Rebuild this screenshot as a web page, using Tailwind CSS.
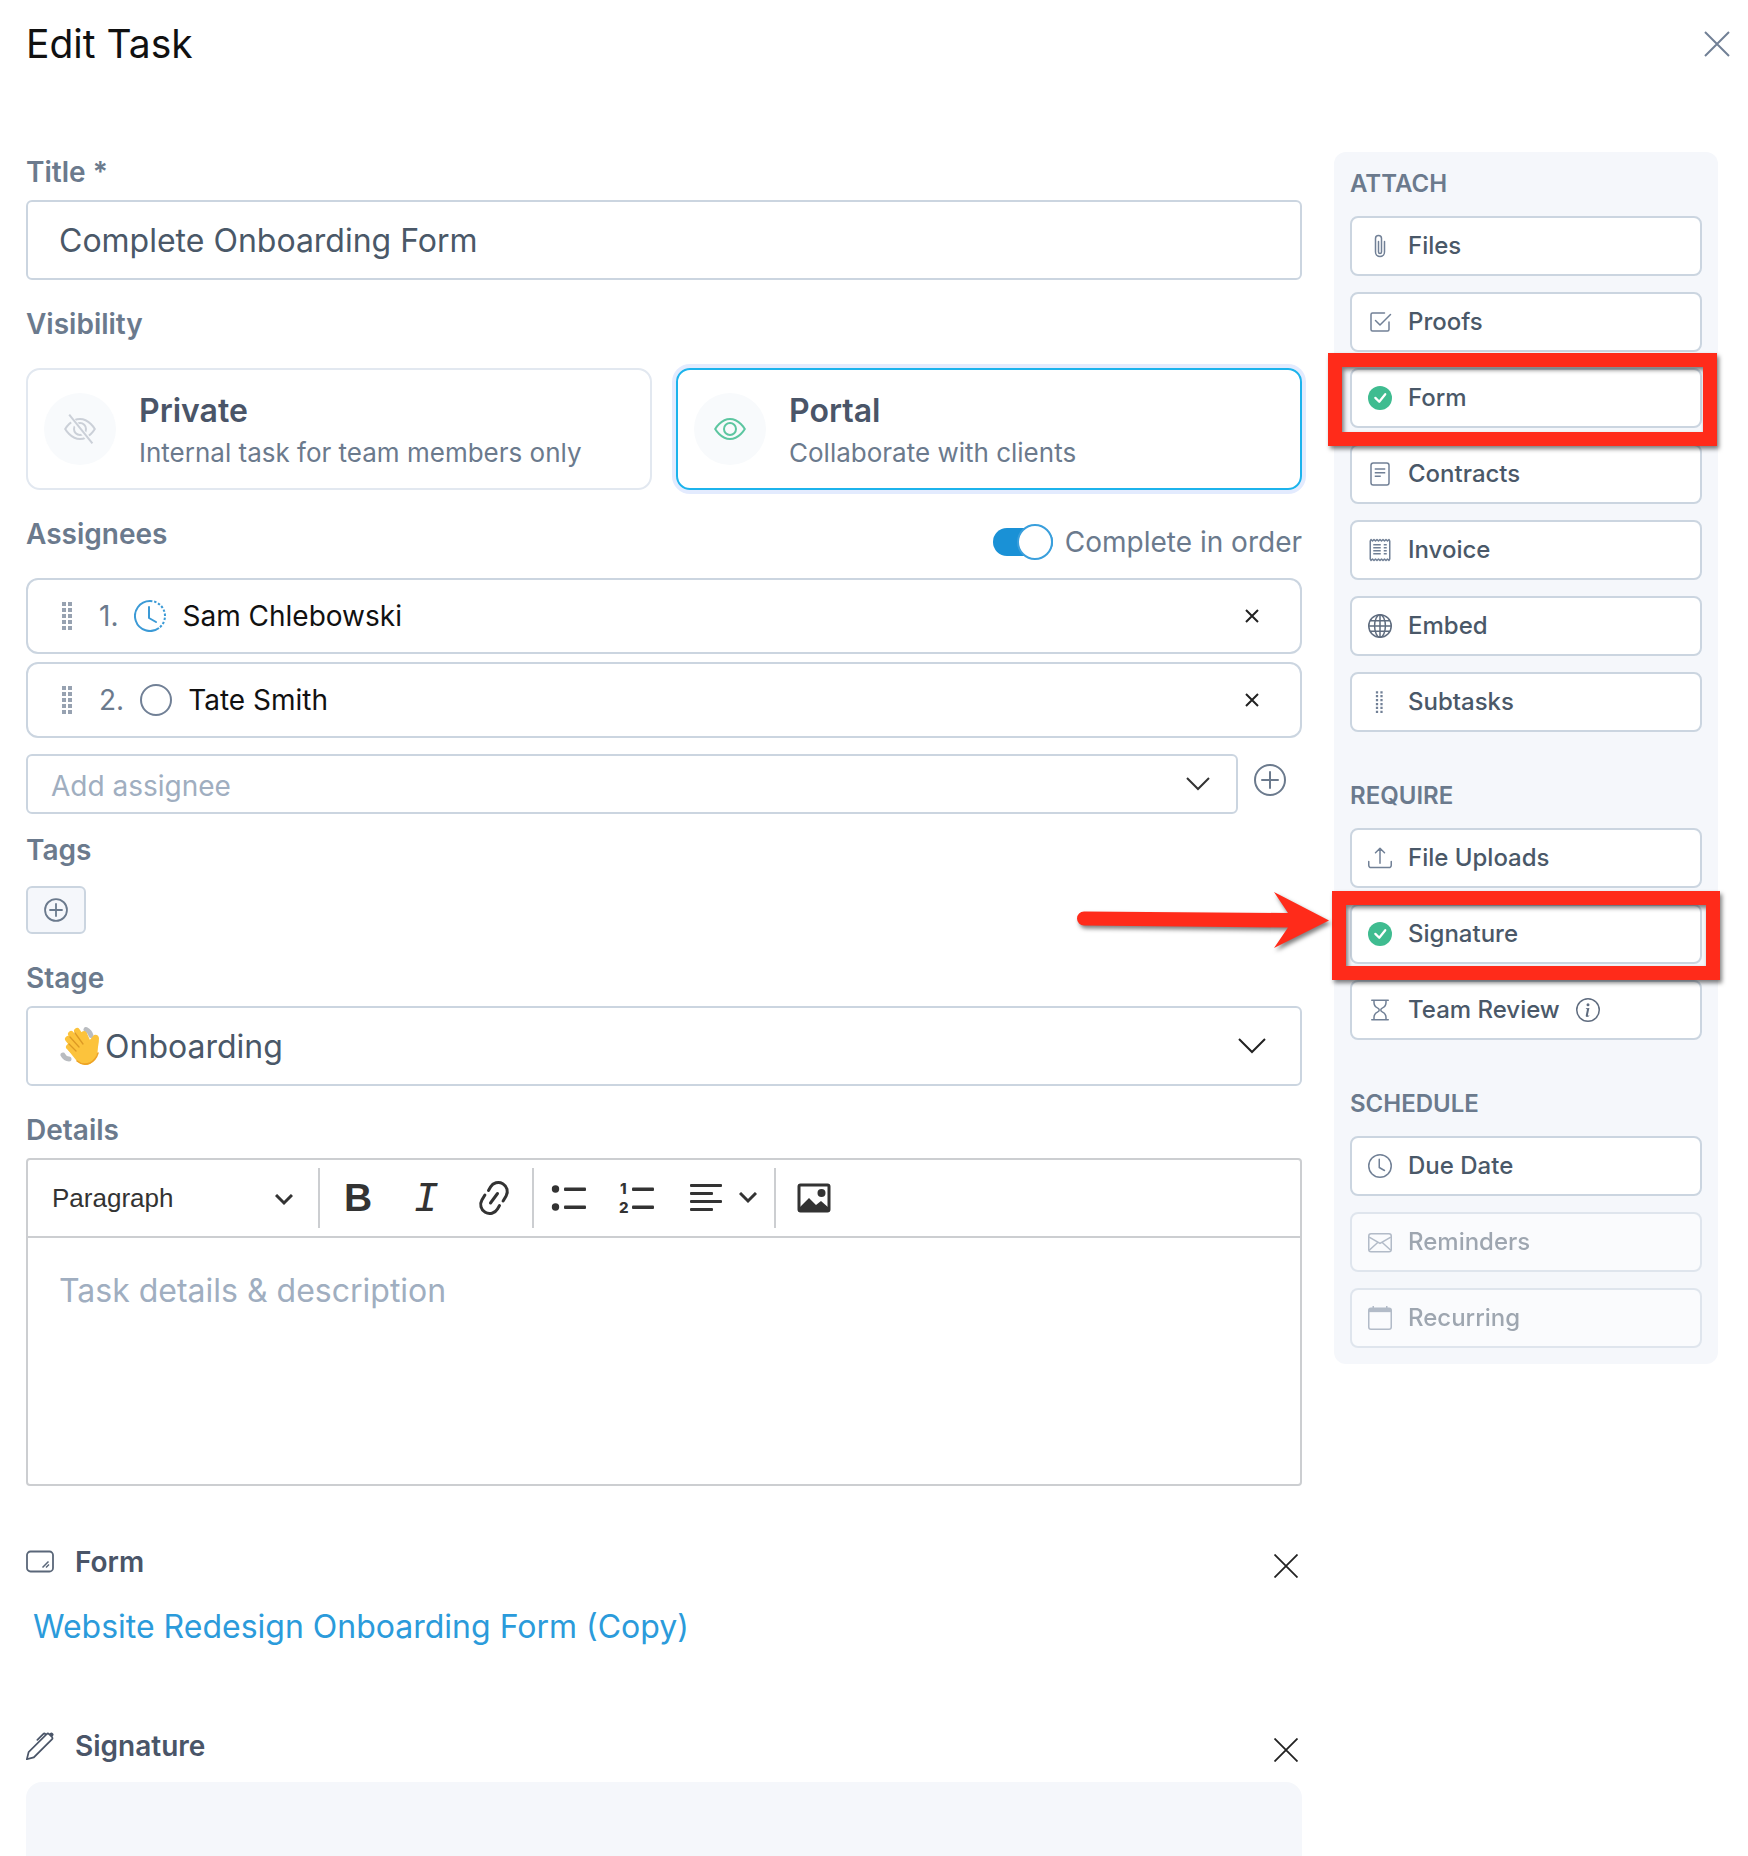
<!DOCTYPE html>
<html lang="en">
<head>
  <meta charset="UTF-8">
  <meta name="viewport" content="width=device-width, initial-scale=1.0">
  <title>Edit Task</title>
  <script src="https://cdn.jsdelivr.net/npm/@tailwindcss/browser@4"></script>
</head>
<body class="bg-white font-['Inter',sans-serif] text-[28px] leading-10 text-[#6b7a8d] flex flex-col min-h-screen">
  <!-- Header -->
  <header class="flex items-center justify-between pt-5 pb-[84px] pl-[26px] pr-[18px]">
    <h1 class="text-[39px] leading-12 text-[#111]">Edit Task</h1>
    <button type="button" aria-label="Close" class="text-[#718096]">
      <svg class="size-[26px]" viewBox="0 0 26 26" fill="none" stroke="currentColor" stroke-width="2"><path d="M1 1l24 24M25 1L1 25"/></svg>
    </button>
  </header>

  <div class="flex-1 grid grid-cols-[minmax(0,1fr)_384px] gap-8 pl-[26px] pr-[30px]">
    <!-- Task form -->
    <main class="flex flex-col">
      <label for="title" class="font-semibold">Title *</label>
      <input id="title" type="text" value="Complete Onboarding Form" class="mt-2 h-20 w-full rounded-md border-2 border-[#cbd5e0] px-[31px] text-[32px] text-[#4a5868]">

      <fieldset class="mt-6">
        <legend class="font-semibold">Visibility</legend>
        <div class="mt-6 grid grid-cols-2 gap-6">
          <label class="flex h-[122px] items-center rounded-[14px] border-2 border-[#e2e8f0] pl-4 has-checked:border-[#1cb3ec] has-checked:ring-4 has-checked:ring-[#e3ebfe]">
            <input type="radio" name="visibility" class="sr-only">
            <span class="flex size-18 items-center justify-center rounded-full bg-[#f8fafc] text-[#cbd0d8]">
              <svg class="size-8" viewBox="0 0 16 16" fill="none" stroke="currentColor"><path d="M.6 8S3.400 3 8 3s7.400 5 7.400 5-2.800 5-7.400 5S.6 8 .6 8z"/><circle cx="8" cy="8" r="3"/><path d="M2.200 1.200l12 14" stroke="#f8fafc" stroke-width="2.400"/><path d="M2.600.8l11.600 14.400"/></svg>
            </span>
            <span class="ml-[23px] flex flex-col pt-1">
              <span class="text-[32px] leading-11 font-semibold text-[#4a5568]">Private</span>
              <span class="text-[26px]">Internal task for team members only</span>
            </span>
          </label>
          <label class="flex h-[122px] items-center rounded-[14px] border-2 border-[#e2e8f0] pl-4 has-checked:border-[#1cb3ec] has-checked:ring-4 has-checked:ring-[#e3ebfe]">
            <input type="radio" name="visibility" class="sr-only" checked>
            <span class="flex size-18 items-center justify-center rounded-full bg-[#f8fafc] text-[#5cc6a0]">
              <svg class="size-8" viewBox="0 0 16 16" fill="none" stroke="currentColor"><path d="M.6 8S3.400 3 8 3s7.400 5 7.400 5-2.800 5-7.400 5S.6 8 .6 8z"/><circle cx="8" cy="8" r="3"/></svg>
            </span>
            <span class="ml-[23px] flex flex-col pt-1">
              <span class="text-[32px] leading-11 font-semibold text-[#4a5568]">Portal</span>
              <span class="text-[26px]">Collaborate with clients</span>
            </span>
          </label>
        </div>
      </fieldset>

      <!-- Assignees -->
      <div class="mt-6 flex h-16 items-start justify-between">
        <h2 class="font-semibold">Assignees</h2>
        <label class="flex h-14 items-center gap-3">
          <input type="checkbox" role="switch" class="peer sr-only" checked>
          <span class="flex h-7 w-15 items-center rounded-full bg-[#cbd5e0] peer-checked:justify-end peer-checked:bg-[#1a91d6]">
            <span class="size-9 shrink-0 rounded-full border-2 border-[#3a9fdc] bg-white"></span>
          </span>
          Complete in order
        </label>
      </div>
      <ol class="flex flex-col gap-2">
        <li class="flex h-19 items-center rounded-xl border-2 border-[#cbd5e0] pl-[33px] pr-10">
          <svg class="h-7 w-3 mr-[26px]" viewBox="0 0 12 28" fill="#97a2b1"><path d="M1 0h4v4H1zM7 0h4v4H7zM1 6h4v4H1zM7 6h4v4H7zM1 12h4v4H1zM7 12h4v4H7zM1 18h4v4H1zM7 18h4v4H7zM1 24h4v4H1zM7 24h4v4H7z"/></svg>
          1.
          <svg class="mx-4 size-8" viewBox="0 0 16 16" fill="none" stroke="#3b9ad6"><path d="M8 .5a7.500 7.500 0 1 0 4.500 13.500"/><path d="M8 .5a7.500 7.500 0 0 1 4.500 13.500" stroke-dasharray="1.200 .9"/><path d="M7.500 3.500V9l3.500 2" stroke-linecap="round" stroke-linejoin="round"/></svg>
          <span class="flex-1 text-[#111]">Sam Chlebowski</span>
          <button type="button" aria-label="Remove Sam Chlebowski">
            <svg class="size-4" viewBox="0 0 16 16" stroke="#222" stroke-width="2"><path d="M2 2l12 12M14 2L2 14"/></svg>
          </button>
        </li>
        <li class="flex h-19 items-center rounded-xl border-2 border-[#cbd5e0] pl-[33px] pr-10">
          <svg class="h-7 w-3 mr-[26px]" viewBox="0 0 12 28" fill="#97a2b1"><path d="M1 0h4v4H1zM7 0h4v4H7zM1 6h4v4H1zM7 6h4v4H7zM1 12h4v4H1zM7 12h4v4H7zM1 18h4v4H1zM7 18h4v4H7zM1 24h4v4H1zM7 24h4v4H7z"/></svg>
          2.
          <svg class="mx-4 size-8" viewBox="0 0 16 16" fill="none" stroke="#718096"><circle cx="8" cy="8" r="7.500"/></svg>
          <span class="flex-1 text-[#111]">Tate Smith</span>
          <button type="button" aria-label="Remove Tate Smith">
            <svg class="size-4" viewBox="0 0 16 16" stroke="#222" stroke-width="2"><path d="M2 2l12 12M14 2L2 14"/></svg>
          </button>
        </li>
      </ol>
      <div class="mt-4 flex items-start gap-4">
        <div class="relative flex-1">
          <select aria-label="Add assignee" class="h-15 w-full appearance-none rounded-md border-2 border-[#cbd5e0] px-[23px] pt-1 text-[#a0aec0]">
            <option>Add assignee</option>
          </select>
          <svg class="pointer-events-none absolute right-7 top-[23px] h-3.5 w-6" viewBox="0 0 24 14" fill="none" stroke="#333" stroke-width="2"><path d="M1 1l11 11L23 1"/></svg>
        </div>
        <button type="button" aria-label="Add" class="mr-4 flex h-13 items-center">
          <svg class="size-8" viewBox="0 0 16 16" fill="none" stroke="currentColor"><circle cx="8" cy="8" r="7.500"/><path d="M8 4v8M4 8h8" stroke-linecap="round"/></svg>
        </button>
      </div>

      <h2 class="mt-4 font-semibold">Tags</h2>
      <button type="button" aria-label="Add tag" class="mt-4 flex h-12 w-15 items-center justify-center rounded-md border-2 border-[#cbd5e0] bg-[#f5f7fb]">
        <svg class="size-6" viewBox="0 0 16 16" fill="none" stroke="currentColor" stroke-width="1.200"><circle cx="8" cy="8" r="7.300"/><path d="M8 4v8M4 8h8" stroke-linecap="round"/></svg>
      </button>

      <label for="stage" class="mt-6 font-semibold">Stage</label>
      <div class="relative mt-2">
        <select id="stage" class="h-20 w-full appearance-none rounded-md border-2 border-[#cbd5e0] pt-0.5 pl-[77px] text-[32px] text-[#4a5868]">
          <option>Onboarding</option>
        </select>
        <!-- Waving hand -->
        <svg class="pointer-events-none absolute left-[34px] top-5 size-10" viewBox="0 0 40 40" fill="none" stroke-linecap="round">
          <g stroke="#b9bcc0" stroke-width="5"><path d="M26 3.500q4 2 5 6M3 29q2 4 6 4"/></g>
          <path d="M16 20l12-4 6-7q4-1 5 3 0 4-1 9 0 12-8 17-8 3-14-4L8 24z" fill="#fcc33c"/>
          <g stroke="#fcc33c" stroke-width="6"><path d="M17 24L8 13M21 20L11 8M25 17L17 5M17 28l-8-7M28 17l-4-9"/></g>
          <g stroke="#dd9a24" stroke-width="1.300"><path d="M19 21L10 11M23 18L15 7M16 25l-7-7"/></g>
          <path d="M17 35q6 5 13 2 6-3 8-10" stroke="#eda326" stroke-width="1.500"/>
        </svg>
        <svg class="pointer-events-none absolute right-[36px] top-8 h-4 w-7" viewBox="0 0 28 16" fill="none" stroke="#222" stroke-width="2"><path d="M1 1l13 13L27 1"/></svg>
      </div>

      <!-- Details editor -->
      <label for="details" class="mt-6 font-semibold">Details</label>
      <div class="mt-2 flex h-[328px] flex-col rounded-sm border-2 border-[#ccced1] text-[#333]">
        <div class="flex h-[78px] items-center border-b-2 border-[#ccced1]">
          <div class="relative w-[290px]">
            <select aria-label="Heading" class="h-15 w-full appearance-none pl-6 font-['Liberation_Sans',sans-serif] text-[26px]">
              <option>Paragraph</option>
            </select>
            <svg class="pointer-events-none absolute right-[25px] top-[26px] h-3 w-[18px]" viewBox="0 0 18 12" fill="none" stroke="#333" stroke-width="3"><path d="M1 1l8 8 8-8"/></svg>
          </div>
          <span class="h-15 w-0.5 bg-[#ccced1]"></span>
          <div class="flex gap-2 px-2">
            <button type="button" aria-label="Bold" class="size-15 font-['Liberation_Sans',sans-serif] text-[39px] font-bold">B</button>
            <button type="button" aria-label="Italic" class="size-15 pt-1 font-['Liberation_Mono',monospace] text-[42px] italic">I</button>
            <button type="button" aria-label="Link" class="flex size-15 items-center justify-center">
              <svg class="size-9" viewBox="0 0 36 36" fill="none" stroke="currentColor" stroke-width="3" stroke-linecap="round"><path d="M12.500 10.500l2-3.500a9 9 0 0 1 15.600 9l-3 5M23.500 25.500l-2 3.500a9 9 0 0 1-15.600-9l3-5M21.500 13.500l-7 9.500"/></svg>
            </button>
          </div>
          <span class="h-15 w-0.5 bg-[#ccced1]"></span>
          <div class="flex gap-2 px-[5px]">
            <button type="button" aria-label="Bulleted list" class="flex size-15 items-center justify-center">
              <svg class="size-9" viewBox="0 0 36 36" fill="currentColor"><circle cx="4.500" cy="9" r="3.700"/><circle cx="4.500" cy="27" r="3.700"/><rect x="13" y="7.500" width="22" height="3.500" rx="1"/><rect x="13" y="25.500" width="22" height="3.500" rx="1"/></svg>
            </button>
            <button type="button" aria-label="Numbered list" class="flex size-15 items-center justify-center">
              <svg class="size-9 overflow-visible" viewBox="0 0 36 36" fill="currentColor"><text x="1" y="14" class="font-['Inter',sans-serif] text-[15px] font-extrabold">1</text><text x="0" y="33" class="font-['Inter',sans-serif] text-[15px] font-extrabold">2</text><rect x="13" y="7.500" width="22" height="3.500" rx="1"/><rect x="13" y="25.500" width="22" height="3.500" rx="1"/></svg>
            </button>
            <button type="button" aria-label="Text alignment" class="flex h-15 w-[94px] items-center justify-center gap-[15px]">
              <svg class="size-9" viewBox="0 0 36 36" fill="currentColor"><rect x="2" y="4" width="32" height="3" rx="1"/><rect x="2" y="12" width="23" height="3" rx="1"/><rect x="2" y="20" width="32" height="3" rx="1"/><rect x="2" y="28" width="23" height="3" rx="1"/></svg>
              <svg class="h-3 w-[18px]" viewBox="0 0 18 12" fill="none" stroke="#333" stroke-width="3"><path d="M1 1l8 8 8-8"/></svg>
            </button>
          </div>
          <span class="h-15 w-0.5 bg-[#ccced1]"></span>
          <button type="button" aria-label="Insert image" class="ml-2 flex size-15 items-center justify-center">
            <svg class="size-9" viewBox="0 0 36 36"><rect x="3" y="5" width="30" height="26" rx="1.500" fill="none" stroke="currentColor" stroke-width="3"/><circle cx="25.500" cy="13" r="4" fill="currentColor"/><path d="M3 28l10-10 7 7 5-4 8 7v3H3z" fill="currentColor"/></svg>
          </button>
        </div>
        <textarea id="details" placeholder="Task details &amp; description" class="w-full flex-1 resize-none px-[31px] pt-[33px] text-[32px] placeholder:text-[#a0aec0]"></textarea>
      </div>

      <!-- Attached form -->
      <section class="mt-14">
        <div class="flex h-12 items-start justify-between">
          <h2 class="flex items-center gap-[21px] font-semibold text-[#4a5568]">
            <svg class="h-6 w-7" viewBox="0 0 28 24" fill="none" stroke="#5a6779" stroke-width="1.800"><rect x="1" y="1.500" width="26" height="20" rx="3.500"/><path d="M16.500 17.500l6-6M20 17.500l3-3" stroke-width="1.500"/></svg>
            Form
          </h2>
          <button type="button" aria-label="Remove form" class="mr-1 flex h-12 items-center">
            <svg class="size-6" viewBox="0 0 24 24" stroke="#222" stroke-width="1.800"><path d="M.5.5l23 23M23.500.5l-23 23"/></svg>
          </button>
        </div>
        <a href="#" class="mt-[17px] ml-[7px] block text-[32px] text-[#2b9bdb]">Website Redesign Onboarding Form (Copy)</a>
      </section>

      <!-- Signature -->
      <section class="mt-[79px] flex flex-1 flex-col">
        <div class="flex h-12 items-start justify-between">
          <h2 class="flex items-center gap-[21px] font-semibold text-[#4a5568]">
            <svg class="size-7" viewBox="0 0 16 16" fill="#4a5568"><path d="m13.498.795.149-.149a1.207 1.207 0 1 1 1.707 1.708l-.149.148a1.500 1.500 0 0 1-.059 2.059L4.854 14.854a.5.5 0 0 1-.233.131l-4 1a.5.5 0 0 1-.606-.606l1-4a.5.5 0 0 1 .131-.232l9.642-9.642a.5.5 0 0 0-.642.056L6.854 4.854a.5.5 0 1 1-.708-.708L9.440.854A1.500 1.500 0 0 1 11.500.796a1.500 1.500 0 0 1 1.998-.001zm-.644.766a.5.5 0 0 0-.707 0L1.950 11.756l-.764 3.057 3.057-.764L14.440 3.854a.5.5 0 0 0 0-.708l-1.585-1.585z"/></svg>
            Signature
          </h2>
          <button type="button" aria-label="Remove signature" class="mr-1 flex h-12 items-center">
            <svg class="size-6" viewBox="0 0 24 24" stroke="#222" stroke-width="1.800"><path d="M.5.5l23 23M23.500.5l-23 23"/></svg>
          </button>
        </div>
        <div class="mt-2 flex-1 rounded-t-2xl bg-[#f5f7fb]"></div>
      </section>
    </main>

    <!-- Sidebar -->
    <aside class="flex flex-col gap-9 self-start rounded-xl bg-[#f5f7fb] px-4 pt-3 pb-4 text-[24px]">
      <section>
        <h2 class="font-semibold">ATTACH</h2>
        <ul class="mt-3 flex flex-col gap-4 font-medium text-[#4a5868]">
          <li>
            <button type="button" class="flex h-15 w-full items-center gap-4 rounded-lg border-2 border-[#cbd5e0] bg-white px-4">
              <svg class="size-6" viewBox="0 0 16 16" fill="#718096"><path d="M4.500 3a2.500 2.500 0 0 1 5 0v9a1.500 1.500 0 0 1-3 0V5a.5.5 0 0 1 1 0v7a.5.5 0 0 0 1 0V3a1.500 1.500 0 1 0-3 0v9a2.500 2.500 0 0 0 5 0V5a.5.5 0 0 1 1 0v7a3.500 3.500 0 1 1-7 0z"/></svg>
              Files
            </button>
          </li>
          <li>
            <button type="button" class="flex h-15 w-full items-center gap-4 rounded-lg border-2 border-[#cbd5e0] bg-white px-4">
              <svg class="size-6" viewBox="0 0 16 16" fill="none" stroke="#718096" stroke-linecap="round" stroke-linejoin="round"><path d="M11 2H3a1 1 0 0 0-1 1v10a1 1 0 0 0 1 1h10a1 1 0 0 0 1-1V8M5 7l3 3 7-7"/></svg>
              Proofs
            </button>
          </li>
          <li class="relative">
            <button type="button" class="flex h-15 w-full items-center gap-4 rounded-lg border-2 border-[#cbd5e0] bg-white px-4">
              <svg class="size-6" viewBox="0 0 16 16" fill="none"><circle cx="8" cy="8" r="8" fill="#3fbc90"/><path d="M4.900 7.900l2.600 2.600 4-5" stroke="#fff" stroke-width="1.500" stroke-linecap="round" stroke-linejoin="round"/></svg>
              Form
            </button>
            <!-- Highlight -->
            <div class="pointer-events-none absolute -top-[15px] -right-[15px] -bottom-[18px] -left-[22px] border-14 border-[#ff2b1a] drop-shadow-[2px_3px_2px_rgba(0,0,0,0.5)]"></div>
          </li>
          <li>
            <button type="button" class="flex h-15 w-full items-center gap-4 rounded-lg border-2 border-[#cbd5e0] bg-white px-4">
              <svg class="size-6" viewBox="0 0 16 16" fill="none" stroke="#718096"><rect x="2" y=".6" width="12" height="14.800" rx="1.500"/><path d="M4.500 4.700h7M4.500 7.200h7M4.500 9.500h4"/></svg>
              Contracts
            </button>
          </li>
          <li>
            <button type="button" class="flex h-15 w-full items-center gap-4 rounded-lg border-2 border-[#cbd5e0] bg-white px-4">
              <svg class="size-6" viewBox="0 0 16 16" fill="none" stroke="#718096" stroke-linejoin="round"><path d="M1.500 2L2 1l1 1 1-1 1 1 1-1 1 1 1-1 1 1 1-1 1 1 1-1 1 1 1-1 .5 1v12l-.5 1-1-1-1 1-1-1-1 1-1-1-1 1-1-1-1 1-1-1-1 1-1-1-1 1-.5-1zM3.500 4.500h5M3.500 6.500h5M3.500 8.500h5M3.500 10.500h5M10.500 4.500h2M10.500 6.500h2M10.500 8.500h2M10.500 10.500h2"/></svg>
              Invoice
            </button>
          </li>
          <li>
            <button type="button" class="flex h-15 w-full items-center gap-4 rounded-lg border-2 border-[#cbd5e0] bg-white px-4">
              <svg class="size-6" viewBox="0 0 16 16" fill="none" stroke="#5f6c7f"><circle cx="8" cy="8" r="7.500"/><ellipse cx="8" cy="8" rx="3.600" ry="7.500"/><path d="M8 .5v15M.5 8h15M1.500 4.500h13M1.500 11.500h13"/></svg>
              Embed
            </button>
          </li>
          <li>
            <button type="button" class="flex h-15 w-full items-center gap-4 rounded-lg border-2 border-[#cbd5e0] bg-white px-4">
              <svg class="size-6" viewBox="0 0 16 16" fill="none" stroke="#718096" stroke-width="1.500"><path d="M6 .8v14.500M9 .8v14.500" stroke-dasharray="1.500 1.100"/></svg>
              Subtasks
            </button>
          </li>
        </ul>
      </section>

      <section>
        <h2 class="font-semibold pt-2">REQUIRE</h2>
        <ul class="mt-3 flex flex-col gap-4 font-medium text-[#4a5868]">
          <li>
            <button type="button" class="flex h-15 w-full items-center gap-4 rounded-lg border-2 border-[#cbd5e0] bg-white px-4">
              <svg class="size-6" viewBox="0 0 16 16" fill="none" stroke="#718096" stroke-linecap="round" stroke-linejoin="round"><path d="M.5 10.400v2.500a1.500 1.500 0 0 0 1.500 1.500h12a1.500 1.500 0 0 0 1.500-1.500v-2.500M8 11.500v-10M5 4.500l3-3 3 3"/></svg>
              File Uploads
            </button>
          </li>
          <li class="relative">
            <button type="button" class="flex h-15 w-full items-center gap-4 rounded-lg border-2 border-[#cbd5e0] bg-white px-4">
              <svg class="size-6" viewBox="0 0 16 16" fill="none"><circle cx="8" cy="8" r="8" fill="#3fbc90"/><path d="M4.900 7.900l2.600 2.600 4-5" stroke="#fff" stroke-width="1.500" stroke-linecap="round" stroke-linejoin="round"/></svg>
              Signature
            </button>
            <!-- Highlight and arrow -->
            <div class="pointer-events-none absolute -top-[13px] -right-[18px] -bottom-[16px] -left-[18px] border-14 border-[#ff2b1a] drop-shadow-[2px_3px_2px_rgba(0,0,0,0.5)]"></div>
            <svg class="pointer-events-none absolute -top-4 -left-[276px] h-16 w-64 drop-shadow-[2px_3px_2px_rgba(0,0,0,0.5)]" viewBox="0 0 256 64" fill="#ff2b1a"><path d="M10 23.500l204 1.500L200 4l55 28.500L200 60l14-20.500L10 37.500a7 7 0 0 1 0-14z"/></svg>
          </li>
          <li>
            <button type="button" class="flex h-15 w-full items-center gap-4 rounded-lg border-2 border-[#cbd5e0] bg-white px-4">
              <svg class="size-6" viewBox="0 0 16 16" fill="none" stroke="#718096" stroke-linecap="round"><path d="M2.500 1.500h11M2.500 14.500h11M4 1.500V3a4 4 0 0 0 2.300 3.600c.7.3 1.200.8 1.200 1.400s-.5 1.100-1.200 1.400A4 4 0 0 0 4 13v1.500M12 1.500V3a4 4 0 0 1-2.300 3.600c-.7.3-1.200.8-1.200 1.400s.5 1.100 1.200 1.400A4 4 0 0 1 12 13v1.500"/></svg>
              Team Review
              <svg class="size-6" viewBox="0 0 16 16" fill="#5f6c7f"><circle cx="8" cy="8" r="7.500" fill="none" stroke="#5f6c7f"/><path d="m8.930 6.588-2.290.287-.082.38.45.083c.294.07.352.176.288.469l-.738 3.468c-.194.897.105 1.319.808 1.319.545 0 1.178-.252 1.465-.598l.088-.416c-.2.176-.492.246-.686.246-.275 0-.375-.193-.304-.533L8.930 6.588zM9 4.500a1 1 0 1 1-2 0 1 1 0 0 1 2 0z"/></svg>
            </button>
          </li>
        </ul>
      </section>

      <section>
        <h2 class="font-semibold pt-2">SCHEDULE</h2>
        <ul class="mt-3 flex flex-col gap-4 font-medium text-[#4a5868]">
          <li>
            <button type="button" class="flex h-15 w-full items-center gap-4 rounded-lg border-2 border-[#cbd5e0] bg-white px-4">
              <svg class="size-6" viewBox="0 0 16 16" fill="none" stroke="#718096" stroke-linecap="round" stroke-linejoin="round"><circle cx="8" cy="8" r="7.500"/><path d="M7.500 3.500V9l3.500 2"/></svg>
              Due Date
            </button>
          </li>
          <li>
            <button type="button" disabled class="flex h-15 w-full items-center gap-4 rounded-lg border-2 border-[#cbd5e0] bg-white px-4 opacity-50">
              <svg class="size-6" viewBox="0 0 16 16" fill="none" stroke="#718096"><rect x=".5" y="2.500" width="15" height="12" rx="1.500"/><path d="M.8 4.700L8 9l7.200-4.300M.8 13.500l5.700-5.200M15.200 13.500L9.500 8.300"/></svg>
              Reminders
            </button>
          </li>
          <li>
            <button type="button" disabled class="flex h-15 w-full items-center gap-4 rounded-lg border-2 border-[#cbd5e0] bg-white px-4 opacity-50">
              <svg class="size-6" viewBox="0 0 16 16" fill="none" stroke="#718096"><rect x=".5" y="1.500" width="15" height="14" rx="1.500"/><path d="M.5 3h15" stroke-width="2.200"/><path d="M3.500 0v2M12.500 0v2"/></svg>
              Recurring
            </button>
          </li>
        </ul>
      </section>
    </aside>
  </div>
</body>
</html>
